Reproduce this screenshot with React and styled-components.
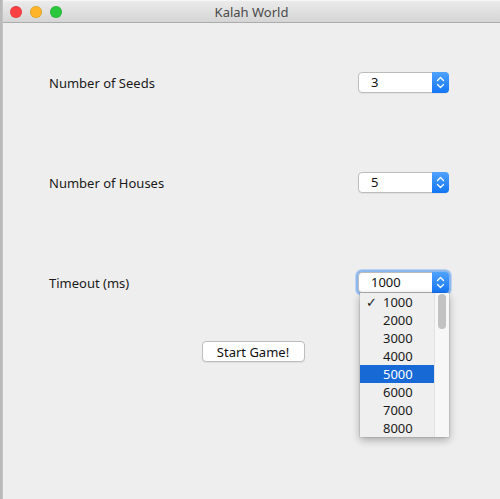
import React from 'react';
import styled, { createGlobalStyle } from 'styled-components';

const GlobalStyle = createGlobalStyle`
  html, body {
    margin: 0;
    padding: 0;
    background: #b9b9b9;
  }
  body {
    font-family: "Noto Sans", "DejaVu Sans", sans-serif;
  }
`;

const Window = styled.div`
  margin-left: 2px;
  width: 498px;
  height: 499px;
  background: #eeeeee;
  display: flex;
  flex-direction: column;
  border-left: 1px solid #c4c4c4;
  box-sizing: border-box;
`;

const TitleBar = styled.div`
  height: 23px;
  flex: none;
  box-sizing: border-box;
  display: flex;
  align-items: center;
  position: relative;
  background: linear-gradient(#ebebeb, #d5d5d5);
  border-top: 1px solid #f6f6f6;
  border-bottom: 1px solid #acacac;
  border-top-left-radius: 5px;
`;

const Lights = styled.div`
  display: flex;
  gap: 8px;
  padding-left: 7px;
`;

const Light = styled.span`
  width: 12px;
  height: 12px;
  border-radius: 50%;
  background: ${(p) => p.color};
  box-shadow: inset 0 0 0 0.5px rgba(0, 0, 0, 0.15);
`;

const Title = styled.div`
  position: absolute;
  left: 0;
  right: 0;
  text-align: center;
  font-size: 13px;
  color: #4a4a4a;
  pointer-events: none;
`;

const Content = styled.div`
  display: flex;
  flex-direction: column;
  padding: 49px 51px 0 46px;
`;

const Row = styled.div`
  display: flex;
  align-items: center;
  justify-content: space-between;
  height: 21px;
  margin-bottom: ${(p) => p.gap}px;
`;

const Label = styled.div`
  font-size: 13px;
  color: #1a1a1a;
`;

const Combo = styled.div`
  position: relative;
  width: 91px;
  height: 21px;
  box-sizing: border-box;
  display: flex;
  background: #ffffff;
  border: 1px solid #bcbcbc;
  border-radius: 4px;
  box-shadow: ${(p) =>
    p.focused ? '0 0 0 2px #8cb7ef, 0 0 0 3px rgba(140,183,239,0.5)' : '0 1px 0 rgba(0,0,0,0.05)'};
`;

const ComboValue = styled.div`
  flex: 1;
  font-size: 13px;
  color: #111;
  padding-left: 12px;
  line-height: 19px;
`;

const ComboArrow = styled.div`
  width: 17px;
  margin: -1px -1px -1px 0;
  border-radius: 0 4px 4px 0;
  background: linear-gradient(#4fa2ff, #1476f5);
  display: flex;
  align-items: center;
  justify-content: center;
`;

const Menu = styled.div`
  position: absolute;
  top: 20px;
  left: 1px;
  width: 89px;
  height: 144px;
  background: #efefef;
  box-shadow: 0 3px 8px rgba(0, 0, 0, 0.3), 0 0 0 0.5px rgba(0, 0, 0, 0.15);
  display: flex;
  z-index: 5;
`;

const MenuList = styled.div`
  flex: 1;
`;

const MenuItem = styled.div`
  height: 18px;
  display: flex;
  align-items: center;
  font-size: 13px;
  color: ${(p) => (p.selected ? '#ffffff' : '#1a1a1a')};
  background: ${(p) => (p.selected ? '#1769d6' : 'transparent')};
`;

const Check = styled.span`
  width: 23px;
  padding-left: 6px;
  box-sizing: border-box;
  font-size: 13px;
`;

const ScrollTrack = styled.div`
  width: 15px;
  background: #f7f7f7;
  border-left: 1px solid #e2e2e2;
  box-sizing: border-box;
  padding: 1px 3px 0 3px;
`;

const Thumb = styled.div`
  height: 35px;
  border-radius: 4px;
  background: #c2c2c2;
`;

const ButtonRow = styled.div`
  display: flex;
  justify-content: center;
  padding-left: 8px;
`;

const Button = styled.button`
  width: 103px;
  height: 21px;
  padding: 0;
  font-family: inherit;
  font-size: 13px;
  color: #111;
  background: #ffffff;
  border: 1px solid #bdbdbd;
  border-radius: 4px;
  box-shadow: 0 1px 0 rgba(0, 0, 0, 0.06);
`;

const Arrows = () => (
  <svg width="9" height="13" viewBox="0 0 9 13" fill="none" stroke="#fff" strokeWidth="1.3" strokeLinecap="round" strokeLinejoin="round">
    <path d="M1.5 4.5 L4.5 1.5 L7.5 4.5" />
    <path d="M1.5 8.5 L4.5 11.5 L7.5 8.5" />
  </svg>
);

const timeouts = [1000, 2000, 3000, 4000, 5000, 6000, 7000, 8000];

const App = () => {
  return (
    <>
      <GlobalStyle />
      <Window>
        <TitleBar>
          <Lights>
            <Light color="#fc3f43" />
            <Light color="#fdb42a" />
            <Light color="#2ac73c" />
          </Lights>
          <Title>Kalah World</Title>
        </TitleBar>
        <Content>
          <Row gap={79}>
            <Label>Number of Seeds</Label>
            <Combo>
              <ComboValue>3</ComboValue>
              <ComboArrow><Arrows /></ComboArrow>
            </Combo>
          </Row>
          <Row gap={79}>
            <Label>Number of Houses</Label>
            <Combo>
              <ComboValue>5</ComboValue>
              <ComboArrow><Arrows /></ComboArrow>
            </Combo>
          </Row>
          <Row gap={48}>
            <Label>Timeout (ms)</Label>
            <Combo focused>
              <ComboValue>1000</ComboValue>
              <ComboArrow><Arrows /></ComboArrow>
              <Menu>
                <MenuList>
                  {timeouts.map((t) => (
                    <MenuItem key={t} selected={t === 5000}>
                      <Check>{t === 1000 ? '✓' : ''}</Check>
                      {t}
                    </MenuItem>
                  ))}
                </MenuList>
                <ScrollTrack>
                  <Thumb />
                </ScrollTrack>
              </Menu>
            </Combo>
          </Row>
          <ButtonRow>
            <Button>Start Game!</Button>
          </ButtonRow>
        </Content>
      </Window>
    </>
  );
};

export default App;
